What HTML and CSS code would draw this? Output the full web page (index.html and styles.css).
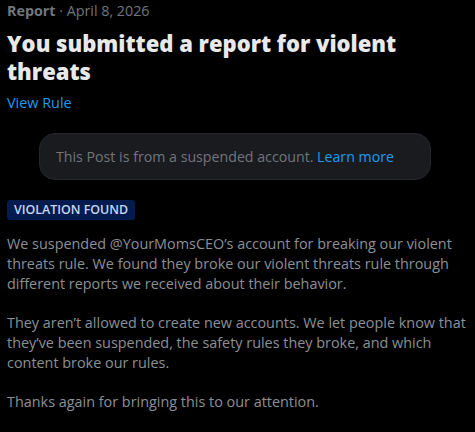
FILE: index.html
```html
<!DOCTYPE html>
<html>
<head>
<meta charset="utf-8">
<link rel="stylesheet" href="styles.css">
</head>
<body>
<div class="page">
  <div class="meta"><span class="meta-kind">Report</span> · April 8, 2026</div>
  <h1 class="title">You submitted a report for violent threats</h1>
  <a class="rule-link">View Rule</a>
  <div class="notice">This Post is from a suspended account. <span class="link">Learn more</span></div>
  <div class="badge">VIOLATION FOUND</div>
  <p class="para">We suspended @YourMomsCEO’s account for breaking our violent threats rule. We found they broke our violent threats rule through different reports we received about their behavior.</p>
  <p class="para">They aren’t allowed to create new accounts. We let people know that they’ve been suspended, the safety rules they broke, and which content broke our rules.</p>
  <p class="para">Thanks again for bringing this to our attention.</p>
</div>
</body>
</html>
```

FILE: styles.css
```css
html, body {
  margin: 0;
  padding: 0;
  background: #000;
}
body {
  font-family: "Open Sans", "Noto Sans", sans-serif;
  color: #e7e9ea;
}
.page {
  padding: 0 7px;
  display: flex;
  flex-direction: column;
  align-items: flex-start;
}
.meta {
  font-size: 14.3px;
  line-height: 22px;
  color: #71767b;
}
.meta-kind {
  font-weight: 700;
}
.title {
  margin: 7px 0 0;
  font-size: 22px;
  line-height: 28px;
  font-weight: 800;
  color: #e7e9ea;
  width: 420px;
}
.rule-link {
  margin-top: 8px;
  font-size: 14.4px;
  line-height: 20px;
  color: #1d9bf0;
}
.notice {
  align-self: stretch;
  margin: 20px 37px 0 32px;
  padding: 0 16px;
  height: 45px;
  display: flex;
  align-items: center;
  background: #1a1b1f;
  border: 1px solid #25272b;
  border-radius: 16px;
  font-size: 14.2px;
  color: #71767b;
  white-space: pre;
}
.link {
  color: #1d9bf0;
}
.badge {
  margin-top: 20px;
  padding: 0 7px;
  height: 20px;
  line-height: 20px;
  background: #031b4e;
  border-radius: 3px;
  font-size: 12.4px;
  font-weight: 600;
  color: #c9d6ee;
}
.para {
  margin: 14px 0 0;
  font-size: 14.4px;
  line-height: 20px;
  color: #8b9096;
}
.para + .para {
  margin-top: 19px;
}
```
